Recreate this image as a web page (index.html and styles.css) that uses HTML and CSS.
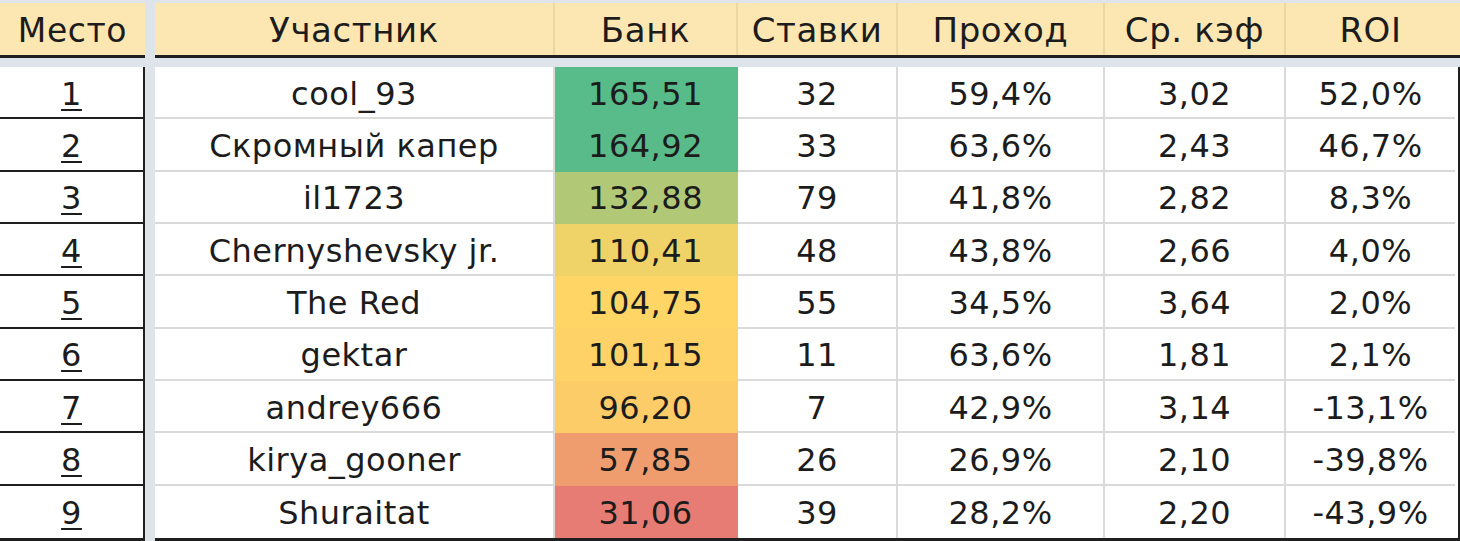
FILE: index.html
```html
<!DOCTYPE html>
<html lang="ru">
<head>
<meta charset="utf-8">
<title>Таблица участников</title>
<link rel="stylesheet" href="styles.css">
</head>
<body>
<div class="sheet">
  <div class="pane pane-left">
    <div class="hdr"><div class="hc">Место</div></div>
    <div class="body body-left">
      <div class="pc"><a class="place">1</a></div>
      <div class="pc"><a class="place">2</a></div>
      <div class="pc"><a class="place">3</a></div>
      <div class="pc"><a class="place">4</a></div>
      <div class="pc"><a class="place">5</a></div>
      <div class="pc"><a class="place">6</a></div>
      <div class="pc"><a class="place">7</a></div>
      <div class="pc"><a class="place">8</a></div>
      <div class="pc"><a class="place">9</a></div>
    </div>
  </div>
  <div class="vsplit"></div>
  <div class="pane pane-right">
    <div class="hdr hdr-grid">
      <div class="hc">Участник</div>
      <div class="hc">Банк</div>
      <div class="hc">Ставки</div>
      <div class="hc">Проход</div>
      <div class="hc">Ср. кэф</div>
      <div class="hc hc-last">ROI</div>
    </div>
    <div class="body body-right">
      <div class="c">cool_93</div><div class="c bank" style="background:#57bb8a">165,51</div><div class="c">32</div><div class="c">59,4%</div><div class="c">3,02</div><div class="c last">52,0%</div>
      <div class="c">Скромный капер</div><div class="c bank" style="background:#59bb8a">164,92</div><div class="c">33</div><div class="c">63,6%</div><div class="c">2,43</div><div class="c last">46,7%</div>
      <div class="c">il1723</div><div class="c bank" style="background:#b1c977">132,88</div><div class="c">79</div><div class="c">41,8%</div><div class="c">2,82</div><div class="c last">8,3%</div>
      <div class="c">Chernyshevsky jr.</div><div class="c bank" style="background:#efd369">110,41</div><div class="c">48</div><div class="c">43,8%</div><div class="c">2,66</div><div class="c last">4,0%</div>
      <div class="c">The Red</div><div class="c bank" style="background:#ffd666">104,75</div><div class="c">55</div><div class="c">34,5%</div><div class="c">3,64</div><div class="c last">2,0%</div>
      <div class="c">gektar</div><div class="c bank" style="background:#fed267">101,15</div><div class="c">11</div><div class="c">63,6%</div><div class="c">1,81</div><div class="c last">2,1%</div>
      <div class="c">andrey666</div><div class="c bank" style="background:#fccc68">96,20</div><div class="c">7</div><div class="c">42,9%</div><div class="c">3,14</div><div class="c last">-13,1%</div>
      <div class="c">kirya_gooner</div><div class="c bank" style="background:#ef9d6e">57,85</div><div class="c">26</div><div class="c">26,9%</div><div class="c">2,10</div><div class="c last">-39,8%</div>
      <div class="c">Shuraitat</div><div class="c bank" style="background:#e67c73">31,06</div><div class="c">39</div><div class="c">28,2%</div><div class="c">2,20</div><div class="c last">-43,9%</div>
    </div>
  </div>
</div>
</body>
</html>
```

FILE: styles.css
```css
html, body {
  margin: 0;
  padding: 0;
  background: #ffffff;
}

.sheet {
  width: 1460px;
  height: 541px;
  display: flex;
  background: #dfe3ea;
  padding-top: 3px;
  box-sizing: border-box;
  font-family: "DejaVu Sans", Verdana, sans-serif;
  font-size: 32px;
  letter-spacing: 0.5px;
  color: #1c1c1c;
  overflow: hidden;
}

.pane {
  display: flex;
  flex-direction: column;
}

.pane-left {
  width: 145px;
}

.vsplit {
  width: 10px;
}

.pane-right {
  width: 1305px;
}

.hdr {
  height: 52px;
  background: #fce6b1;
  border-bottom: 3px solid #1f1f1f;
  display: flex;
  margin-bottom: 9px;
}

.hdr-grid {
  display: grid;
  grid-template-columns: 400px 183px 160px 207px 181px 174px;
}

.hc {
  display: flex;
  align-items: center;
  justify-content: center;
  flex: 1;
  border-right: 2px solid #ead7a3;
  padding-top: 2px;
  font-size: 34px;
  letter-spacing: 0.6px;
  white-space: nowrap;
}

.pane-left .hc {
  border-right: none;
  font-size: 33px;
}

.hc-last {
  border-right: none;
  padding-right: 5px;
}

.body {
  flex: 1;
  background: #ffffff;
  display: grid;
  grid-template-rows: repeat(9, 1fr);
  border-bottom: 3px solid #1f1f1f;
}

.body-left {
  border-right: 2px solid #1f1f1f;
}

.pc {
  display: flex;
  align-items: center;
  justify-content: center;
  border-bottom: 2px solid #1f1f1f;
  padding-top: 3px;
}

.pc:last-child {
  border-bottom: none;
}

.place {
  color: #1c1c1c;
  text-decoration: underline;
  text-decoration-thickness: 2px;
  text-underline-offset: 4px;
}

.body-right {
  grid-template-columns: 400px 183px 160px 207px 181px 169px;
  width: 1303px;
  border-right: 3px solid #1f1f1f;
}

.c {
  display: flex;
  align-items: center;
  justify-content: center;
  border-right: 2px solid #dadada;
  border-bottom: 2px solid #dadada;
  padding-top: 3px;
  white-space: nowrap;
}

.c.last {
  border-right: none;
}

.c:nth-last-child(-n+6) {
  border-bottom: none;
}

.bank {
  border-color: transparent;
}
```
